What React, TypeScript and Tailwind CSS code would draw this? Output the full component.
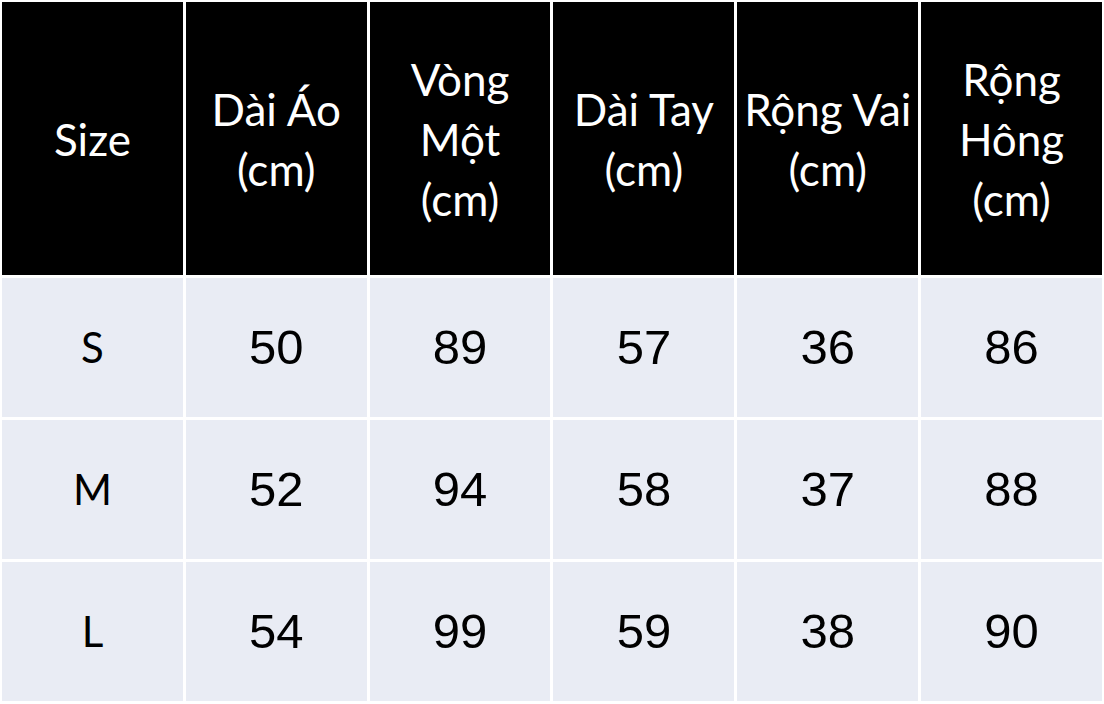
const HEADERS = [
  ["Size"],
  ["Dài Áo", "(cm)"],
  ["Vòng", "Một", "(cm)"],
  ["Dài Tay", "(cm)"],
  ["Rộng Vai", "(cm)"],
  ["Rộng", "Hông", "(cm)"],
];

const ROWS = [
  ["S", "50", "89", "57", "36", "86"],
  ["M", "52", "94", "58", "37", "88"],
  ["L", "54", "99", "59", "38", "90"],
];

export default function App() {
  return (
    <div className="w-[1104px] h-[704px] bg-white p-[2px] overflow-hidden">
      <div className="grid grid-cols-6 grid-rows-[273px_139px_139px_139px] gap-[3px]">
        {HEADERS.map((lines, i) => (
          <div
            key={i}
            className="bg-black text-white flex flex-col items-center justify-center text-[44px] leading-[60px] font-['Lato',sans-serif] whitespace-nowrap"
          >
            {lines.map((l) => (
              <span key={l}>{l}</span>
            ))}
          </div>
        ))}
        {ROWS.map((row) =>
          row.map((cell, j) => (
            <div
              key={row[0] + j}
              className={
                j === 0
                  ? "bg-[#e9ecf4] text-black flex items-center justify-center text-[42px] font-['Lato',sans-serif]"
                  : "bg-[#e9ecf4] text-black flex items-center justify-center text-[49px] font-['Liberation_Sans',sans-serif]"
              }
            >
              {cell}
            </div>
          ))
        )}
      </div>
    </div>
  );
}
